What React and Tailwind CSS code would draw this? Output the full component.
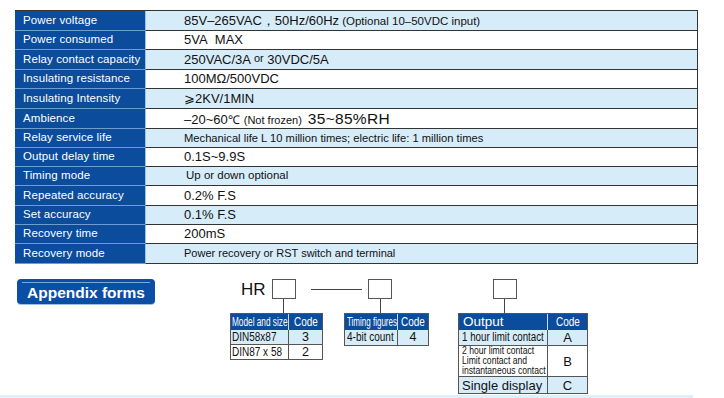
import React from "react";

const specs = [
  { label: "Power voltage", h: "h-[20px]", value: <span className="text-[13px]">85V–265VAC，50Hz/60Hz<span className="text-[11.5px] ml-[3px]">(Optional 10–50VDC input)</span></span> },
  { label: "Power consumed", h: "h-[19px]", value: <span className="text-[13px]">5VA&nbsp;&nbsp;MAX</span> },
  { label: "Relay contact capacity", h: "h-[20px]", value: <span className="text-[13px]">250VAC/3A <span className="text-[11px] align-[2px]">or</span> 30VDC/5A</span> },
  { label: "Insulating resistance", h: "h-[19px]", value: <span className="text-[13px]">100MΩ/500VDC</span> },
  { label: "Insulating Intensity", h: "h-[20px]", value: <span className="text-[13px]">⩾2KV/1MIN</span> },
  { label: "Ambience", h: "h-[20px]", value: <span className="text-[13px]">–20~60<span className="text-[12px]">℃</span><span className="text-[11px] ml-[4px]">(Not frozen)</span><span className="text-[15.5px] ml-[6px] tracking-[0.3px]">35~85%RH</span></span> },
  { label: "Relay service life", h: "h-[19px]", value: <span className="text-[11.2px]">Mechanical life L 10 million times; electric life: 1 million times</span> },
  { label: "Output delay time", h: "h-[19px]", value: <span className="text-[13px]">0.1S~9.9S</span> },
  { label: "Timing mode", h: "h-[19px]", value: <span className="text-[11.5px] pl-[2px]">Up or down optional</span> },
  { label: "Repeated accuracy", h: "h-[20px]", value: <span className="text-[13px]">0.2% F.S</span> },
  { label: "Set accuracy", h: "h-[19px]", value: <span className="text-[13px]">0.1% F.S</span> },
  { label: "Recovery time", h: "h-[19px]", value: <span className="text-[13px]">200mS</span> },
  { label: "Recovery mode", h: "h-[20px]", value: <span className="text-[11px]">Power recovery or RST switch and terminal</span> },
];

// condensed look: squeeze Liberation Sans horizontally
function N({ children, className = "[transform:scaleX(0.8)] origin-left" }) {
  return <span className={`inline-block whitespace-nowrap ${className}`}>{children}</span>;
}

function Box() {
  return <div className="w-[24px] h-[20px] border border-[#555] bg-white shrink-0" />;
}

function Stem({ offset }) {
  return <div className={`${offset} w-px h-[14px] bg-[#444]`} />;
}

export default function App() {
  return (
    <div
      className="relative w-[724px] h-[398px] bg-white overflow-hidden text-[#111]"
      style={{ fontFamily: '"Liberation Sans", Arial, sans-serif' }}
    >
      {/* spec table */}
      <div className="ml-[15px] mt-[10px] w-[683px] flex flex-col border-t border-[#333]">
        {specs.map((row, i) => (
          <div key={row.label} className={`flex ${row.h}`}>
            <div className="w-[130px] shrink-0 bg-[#0b4c9c] text-white text-[11.5px] tracking-[0.1px] pl-[8px] flex items-center whitespace-nowrap border-b border-[#6f9bd3]">
              {row.label}
            </div>
            <div
              className={`flex-1 flex items-center pl-[38px] whitespace-nowrap border-b border-r border-l border-l-[#9cc3e6] border-[#333] ${
                i % 2 === 0 ? "bg-[#d6ecf9]" : "bg-white"
              }`}
            >
              {row.value}
            </div>
          </div>
        ))}
      </div>

      {/* appendix area */}
      <div className="relative flex items-start mt-[15px]">
        <div className="ml-[17px] w-[138px] h-[25px] rounded-[4px] bg-[#0b4ea6] flex flex-col items-center shadow-[0_1px_0_#9cc3e6]">
          <div className="mt-[3px] w-[128px] h-px bg-[#7aa6dc]" />
          <div className="text-white font-bold text-[15.5px] leading-[18px] mt-[1px]">Appendix forms</div>
        </div>

        {/* connector between HR box and timing box */}
        <div className="absolute left-[311px] top-[10px] w-[51px] h-px bg-[#444]" />

        {/* group 1 */}
        <div className="ml-[75px] flex flex-col">
          <div className="flex items-center h-[20px]">
            <div className="w-[42px] pl-[11px] text-[17px] leading-none">HR</div>
            <Box />
          </div>
          <Stem offset="ml-[53px]" />
          <div className="w-[93px] border-l border-t border-[#555] text-[12.5px] leading-none">
            <div className="flex h-[16px] bg-[#0b4c9c] text-white">
              <div className="w-[58px] border-r border-[#c9dcef] pl-px flex items-center"><N className="[transform:scaleX(0.66)] origin-left">Model and size</N></div>
              <div className="flex-1 flex items-center justify-center border-r border-[#555]"><N className="[transform:scaleX(0.8)]">Code</N></div>
            </div>
            <div className="flex h-[15px] bg-[#d6ecf9] border-b border-[#555]">
              <div className="w-[58px] border-r border-[#555] pl-px flex items-center"><N>DIN58x87</N></div>
              <div className="flex-1 flex items-center justify-center border-r border-[#555]">3</div>
            </div>
            <div className="flex h-[15px] bg-white border-b border-[#555]">
              <div className="w-[58px] border-r border-[#555] pl-px flex items-center"><N>DIN87 x 58</N></div>
              <div className="flex-1 flex items-center justify-center border-r border-[#555]">2</div>
            </div>
          </div>
        </div>

        {/* group 2 */}
        <div className="ml-[21px] flex flex-col">
          <div className="flex items-center h-[20px] pl-[24px]">
            <Box />
          </div>
          <Stem offset="ml-[36px]" />
          <div className="w-[85px] border-l border-t border-[#555] text-[12.5px] leading-none">
            <div className="flex h-[16px] bg-[#0b4c9c] text-white">
              <div className="w-[53px] border-r border-[#c9dcef] pl-[2px] flex items-center"><N className="[transform:scaleX(0.64)] origin-left">Timing figures</N></div>
              <div className="flex-1 flex items-center justify-center border-r border-[#555]"><N className="[transform:scaleX(0.8)]">Code</N></div>
            </div>
            <div className="flex h-[16px] bg-[#d6ecf9] border-b border-[#555]">
              <div className="w-[53px] border-r border-[#555] pl-[2px] flex items-center"><N className="[transform:scaleX(0.8)] origin-left">4-bit count</N></div>
              <div className="flex-1 flex items-center justify-center border-r border-[#555]">4</div>
            </div>
          </div>
        </div>

        {/* group 3 */}
        <div className="ml-[29px] flex flex-col">
          <div className="flex items-center h-[20px] pl-[35px]">
            <Box />
          </div>
          <Stem offset="ml-[46px]" />
          <div className="w-[130px] border-l border-t border-[#555] text-[12.5px] leading-none">
            <div className="flex h-[16px] bg-[#0b4c9c] text-white">
              <div className="w-[89px] border-r border-[#c9dcef] pl-[4px] flex items-center text-[13.5px]">Output</div>
              <div className="flex-1 flex items-center justify-center border-r border-[#555]"><N className="[transform:scaleX(0.8)]">Code</N></div>
            </div>
            <div className="flex h-[16px] bg-[#d6ecf9] border-b border-[#555]">
              <div className="w-[89px] border-r border-[#555] pl-[3px] flex items-center"><N className="[transform:scaleX(0.78)] origin-left">1 hour limit contact</N></div>
              <div className="flex-1 flex items-center justify-center border-r border-[#555] text-[13px]">A</div>
            </div>
            <div className="flex h-[31px] bg-white border-b border-[#555]">
              <div className="w-[89px] border-r border-[#555] pl-[3px] flex flex-col justify-center text-[10px] leading-[10px]">
                <N className="[transform:scaleX(0.86)] origin-left">2 hour limit contact</N>
                <N className="[transform:scaleX(0.86)] origin-left">Limit contact and</N>
                <N className="[transform:scaleX(0.86)] origin-left">instantaneous contact</N>
              </div>
              <div className="flex-1 flex items-center justify-center border-r border-[#555] text-[13px]">B</div>
            </div>
            <div className="flex h-[17px] bg-[#d6ecf9] border-b border-[#555]">
              <div className="w-[89px] border-r border-[#555] pl-[3px] flex items-center text-[13px]">Single display</div>
              <div className="flex-1 flex items-center justify-center border-r border-[#555] text-[13px]">C</div>
            </div>
          </div>
        </div>
      </div>

      {/* bottom strip */}
      <div className="absolute left-0 bottom-0 w-[693px] h-[3px] bg-[#dff0fb]" />
    </div>
  );
}
